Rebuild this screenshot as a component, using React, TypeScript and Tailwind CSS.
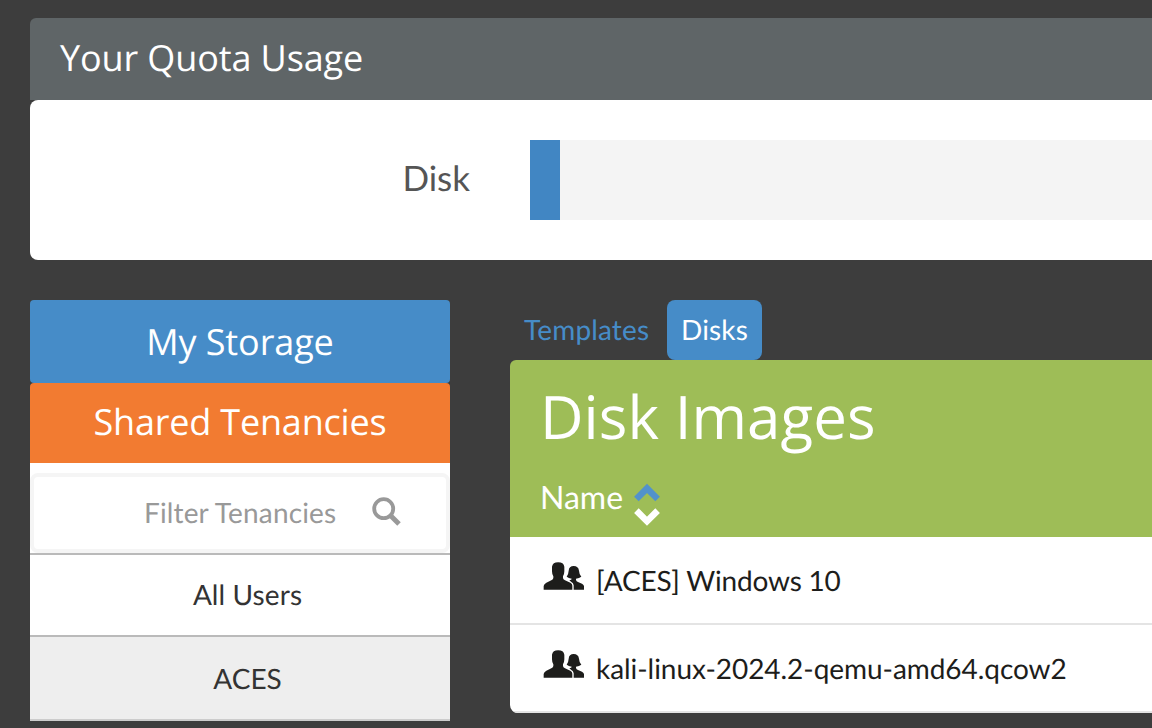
import React from "react";

function UsersIcon() {
  return (
    <svg className="relative -top-1 h-[30px] w-[42px] shrink-0" viewBox="24 33 126 90" fill="#1d1d1b">
      <path d="M26 119.500V108Q27 102 34 98L49 91Q55 88 55 84V79Q51 73 51 64V50Q53 37 69.500 37Q86 37 88 50V64Q88 73 84 79V84Q84 88 90 91L106 98Q112 101 112 107V119.500Z" />
      <path d="M116 119.500V106Q115 99 109 96L103 91Q110 90 110 87V86Q101 85 95 80Q100 75 101 62Q102 48 116 48Q130 48 132 62Q133 75 139 80Q133 85 123 86V90Q124 94 129 96L141 101Q147 104 147 109V119.500Z" />
    </svg>
  );
}

function SortIcon() {
  return (
    <svg className="relative top-[6px] h-11 w-[30px]" viewBox="0 0 30 44" fill="none" strokeWidth="6.500">
      <path d="M4.400 17L15 6.400L25.600 17" stroke="#5292cc" />
      <path d="M4.400 28.600L15 39.200L25.600 28.600" stroke="#fff" />
    </svg>
  );
}

function SearchIcon() {
  return (
    <svg className="relative -left-px -top-[2px] h-[30px] w-[30px]" viewBox="0 0 30 30" fill="none" stroke="#999">
      <circle cx="12.700" cy="12.700" r="9.500" strokeWidth="3.800" />
      <path d="M19.500 19.500L28 28" strokeWidth="5" />
    </svg>
  );
}

const disks = [
  { name: "[ACES] Windows 10", tracking: "tracking-[-0.19px]" },
  { name: "kali-linux-2024.2-qemu-amd64.qcow2", tracking: "tracking-[-0.05px]" },
];

export default function App() {
  return (
    <div className="flex h-[728px] w-[1152px] flex-col overflow-hidden bg-[#3d3d3d] pl-[30px] pt-[18px] font-['Lato',sans-serif] text-[28px] [text-rendering:geometricPrecision]">
      <header className="flex h-[82px] shrink-0 items-center rounded-tl-[6px] bg-[#5f6567] pl-[30px] pb-[3px] font-['Open_Sans',sans-serif] text-[36px] text-white">
        <h1 className="tracking-[-0.12px]">Your Quota Usage</h1>
      </header>
      <section className="flex h-40 shrink-0 items-center rounded-l-lg bg-white">
        <div className="w-[440px] pb-[3px] text-right text-[35px] text-[#555]">Disk</div>
        <div className="ml-[60px] h-20 flex-1 bg-[#f4f4f4]">
          <div className="h-full w-[30px] bg-[#4186c3]" />
        </div>
      </section>
      <div className="mt-10 flex items-start">
        <aside className="w-[420px] shrink-0 text-[#333]">
          <div className="flex h-[83px] items-center justify-center rounded-[4px] bg-[#468cc8] font-['Open_Sans',sans-serif] text-[36px] text-white">
            <span className="tracking-[-0.1px]">My Storage</span>
          </div>
          <div className="flex h-20 items-center justify-center rounded-t-[4px] bg-[#f27b31] pb-[2px] font-['Open_Sans',sans-serif] text-[36px] text-white">
            <span className="tracking-[-0.2px]">Shared Tenancies</span>
          </div>
          <div className="bg-white pt-[10px]">
            <div className="flex h-20 items-center rounded-lg border-4 border-[#f5f5f5] pl-[110px] text-[#999]">
              <span className="w-[228px] pb-[2px] tracking-[0.15px]">Filter Tenancies</span>
              <SearchIcon />
            </div>
          </div>
          <div className="flex h-[82px] items-center justify-center border-t-2 border-[#bababa] bg-white pb-[2px] pl-[15px] tracking-[0.1px]">All Users</div>
          <div className="flex h-[84px] items-center justify-center border-t-2 border-t-[#bababa] bg-[#eee] pl-[15px]">ACES</div>
          <div className="h-[2px] bg-[#ccc]" />
        </aside>
        <main className="ml-[60px] flex-1">
          <nav className="flex h-[60px] items-center">
            <span className="w-[157px] pb-[2px] pl-[14px] tracking-[0.15px] text-[#468cc8]">Templates</span>
            <span className="flex h-[60px] w-[95px] items-center justify-center rounded-lg bg-[#468cc8] pb-[2px] tracking-[0.15px] text-white">Disks</span>
          </nav>
          <div className="h-[177px] rounded-tl-[6px] bg-[#9ebd57] pl-[30px] pt-[15px] text-white">
            <h2 className="font-['Open_Sans',sans-serif] text-[60px] leading-[82px] tracking-[0.06px]">Disk Images</h2>
            <div className="mt-[21px] flex h-10 items-center">
              <span className="w-[92px] pb-[2px] text-[32px]">Name</span>
              <SortIcon />
            </div>
          </div>
          <ul className="overflow-hidden rounded-bl-lg bg-white text-[#1d1d1b]">
            {disks.map((disk) => (
              <li key={disk.name} className="flex h-[88px] items-center border-b-2 border-[#e4e4e4] pl-[33px]">
                <UsersIcon />
                <span className={`ml-[11px] ${disk.tracking}`}>{disk.name}</span>
              </li>
            ))}
          </ul>
        </main>
      </div>
    </div>
  );
}
